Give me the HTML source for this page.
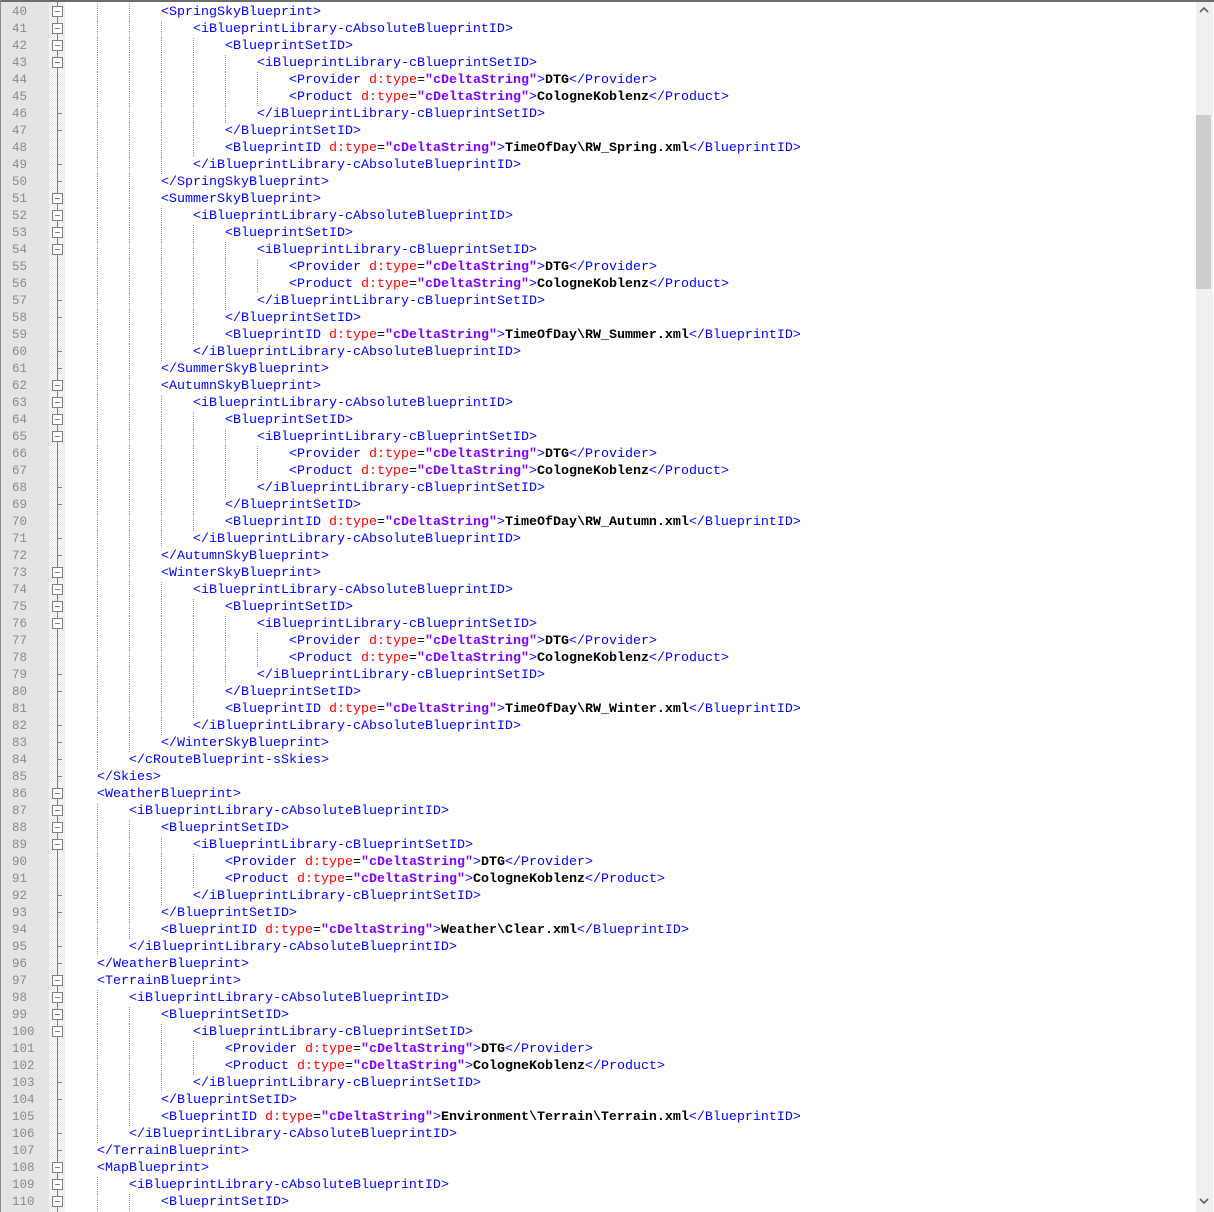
<!DOCTYPE html>
<html><head><meta charset="utf-8"><style>
html,body{margin:0;padding:0;width:1214px;height:1212px;overflow:hidden;background:#fff;}
#wrap{position:absolute;left:0;top:0;width:1214px;height:1212px;}
#topb{position:absolute;left:0;top:0;width:1214px;height:2px;background:#6d6d6d;}
#leftb{position:absolute;left:0;top:0;width:1px;height:1212px;background:#8a8a8a;}
#num{position:absolute;left:1px;top:2px;width:48px;height:1210px;background:#e4e4e4;}
#fold{position:absolute;left:49px;top:2px;width:16px;height:1210px;background-color:#f4f4f4;
 background-image:repeating-conic-gradient(#e8e8e8 0 25%,#fbfbfb 0 50%);background-size:2px 2px;}
#sb{position:absolute;left:1196px;top:2px;width:17px;height:1210px;background:#f0f0f0;}
#thumb{position:absolute;left:1196px;top:115px;width:15px;height:174px;background:#cdcdcd;}
.row{position:absolute;left:0;height:17px;width:1196px;font-family:"Liberation Mono",monospace;font-size:13.33px;line-height:17px;white-space:pre;}
.ln{position:absolute;left:12px;color:#8a8a8a;font-size:12.5px;}
.code{position:absolute;top:0;}
.t{color:#0000ff}.a{color:#ff0000}.v{color:#8000ff;font-weight:bold}.x{color:#000;font-weight:bold}.e{color:#000}
.g{position:absolute;top:0;width:1px;height:17px;background:repeating-linear-gradient(#999 0 1px,transparent 1px 2px);}
.vl{position:absolute;left:57px;width:1px;background:#808080;}
.box{position:absolute;left:52px;width:11px;height:11px;border:1px solid #808080;background:#fff;box-sizing:border-box;}
.box:after{content:"";position:absolute;left:2px;top:4px;width:5px;height:1px;background:#808080;}
.tick{position:absolute;left:57px;width:5px;height:1px;background:#808080;}
</style></head><body><div id="wrap">
<div id="num"></div><div id="fold"></div>
<div id="lines"></div>
<div id="sb"></div><div id="thumb"></div>
<svg style="position:absolute;left:1198px;top:6px" width="12" height="8"><path d="M2 6 L6 2 L10 6" stroke="#606060" stroke-width="1.6" fill="none"/></svg>
<svg style="position:absolute;left:1198px;top:1197px" width="12" height="8"><path d="M2 2 L6 6 L10 2" stroke="#606060" stroke-width="1.6" fill="none"/></svg>
<div id="topb"></div><div id="leftb"></div>
</div>
<script>
var L=[
[3,'<SpringSkyBlueprint>'],
[4,'<iBlueprintLibrary-cAbsoluteBlueprintID>'],
[5,'<BlueprintSetID>'],
[6,'<iBlueprintLibrary-cBlueprintSetID>'],
[7,'<Provider d:type="cDeltaString">DTG</Provider>'],
[7,'<Product d:type="cDeltaString">CologneKoblenz</Product>'],
[6,'</iBlueprintLibrary-cBlueprintSetID>'],
[5,'</BlueprintSetID>'],
[5,'<BlueprintID d:type="cDeltaString">TimeOfDay\\RW_Spring.xml</BlueprintID>'],
[4,'</iBlueprintLibrary-cAbsoluteBlueprintID>'],
[3,'</SpringSkyBlueprint>'],
[3,'<SummerSkyBlueprint>'],
[4,'<iBlueprintLibrary-cAbsoluteBlueprintID>'],
[5,'<BlueprintSetID>'],
[6,'<iBlueprintLibrary-cBlueprintSetID>'],
[7,'<Provider d:type="cDeltaString">DTG</Provider>'],
[7,'<Product d:type="cDeltaString">CologneKoblenz</Product>'],
[6,'</iBlueprintLibrary-cBlueprintSetID>'],
[5,'</BlueprintSetID>'],
[5,'<BlueprintID d:type="cDeltaString">TimeOfDay\\RW_Summer.xml</BlueprintID>'],
[4,'</iBlueprintLibrary-cAbsoluteBlueprintID>'],
[3,'</SummerSkyBlueprint>'],
[3,'<AutumnSkyBlueprint>'],
[4,'<iBlueprintLibrary-cAbsoluteBlueprintID>'],
[5,'<BlueprintSetID>'],
[6,'<iBlueprintLibrary-cBlueprintSetID>'],
[7,'<Provider d:type="cDeltaString">DTG</Provider>'],
[7,'<Product d:type="cDeltaString">CologneKoblenz</Product>'],
[6,'</iBlueprintLibrary-cBlueprintSetID>'],
[5,'</BlueprintSetID>'],
[5,'<BlueprintID d:type="cDeltaString">TimeOfDay\\RW_Autumn.xml</BlueprintID>'],
[4,'</iBlueprintLibrary-cAbsoluteBlueprintID>'],
[3,'</AutumnSkyBlueprint>'],
[3,'<WinterSkyBlueprint>'],
[4,'<iBlueprintLibrary-cAbsoluteBlueprintID>'],
[5,'<BlueprintSetID>'],
[6,'<iBlueprintLibrary-cBlueprintSetID>'],
[7,'<Provider d:type="cDeltaString">DTG</Provider>'],
[7,'<Product d:type="cDeltaString">CologneKoblenz</Product>'],
[6,'</iBlueprintLibrary-cBlueprintSetID>'],
[5,'</BlueprintSetID>'],
[5,'<BlueprintID d:type="cDeltaString">TimeOfDay\\RW_Winter.xml</BlueprintID>'],
[4,'</iBlueprintLibrary-cAbsoluteBlueprintID>'],
[3,'</WinterSkyBlueprint>'],
[2,'</cRouteBlueprint-sSkies>'],
[1,'</Skies>'],
[1,'<WeatherBlueprint>'],
[2,'<iBlueprintLibrary-cAbsoluteBlueprintID>'],
[3,'<BlueprintSetID>'],
[4,'<iBlueprintLibrary-cBlueprintSetID>'],
[5,'<Provider d:type="cDeltaString">DTG</Provider>'],
[5,'<Product d:type="cDeltaString">CologneKoblenz</Product>'],
[4,'</iBlueprintLibrary-cBlueprintSetID>'],
[3,'</BlueprintSetID>'],
[3,'<BlueprintID d:type="cDeltaString">Weather\\Clear.xml</BlueprintID>'],
[2,'</iBlueprintLibrary-cAbsoluteBlueprintID>'],
[1,'</WeatherBlueprint>'],
[1,'<TerrainBlueprint>'],
[2,'<iBlueprintLibrary-cAbsoluteBlueprintID>'],
[3,'<BlueprintSetID>'],
[4,'<iBlueprintLibrary-cBlueprintSetID>'],
[5,'<Provider d:type="cDeltaString">DTG</Provider>'],
[5,'<Product d:type="cDeltaString">CologneKoblenz</Product>'],
[4,'</iBlueprintLibrary-cBlueprintSetID>'],
[3,'</BlueprintSetID>'],
[3,'<BlueprintID d:type="cDeltaString">Environment\\Terrain\\Terrain.xml</BlueprintID>'],
[2,'</iBlueprintLibrary-cAbsoluteBlueprintID>'],
[1,'</TerrainBlueprint>'],
[1,'<MapBlueprint>'],
[2,'<iBlueprintLibrary-cAbsoluteBlueprintID>'],
[3,'<BlueprintSetID>']
];
function esc(s){return s.replace(/&/g,'&amp;').replace(/</g,'&lt;').replace(/>/g,'&gt;');}
function hl(s){
 var out='',re=/(<[^>]*>)|([^<]+)/g,m;
 while((m=re.exec(s))){
  if(m[1]){
   var t=m[1],mm=t.match(/^(<\/?[\w\-]+)(.*?)(\/?>)$/);
   out+='<span class="t">'+esc(mm[1])+'</span>';
   var rest=mm[2];
   rest=rest.replace(/ ([\w:]+)="([^"]*)"/g,function(_,n,v){return ' <span class="a">'+n+'</span><span class="e">=</span><span class="v">"'+v+'"</span>';});
   out+=rest+'<span class="t">'+esc(mm[3])+'</span>';
  } else out+='<span class="x">'+esc(m[2])+'</span>';
 }
 return out;
}
var h='';
for(var i=0;i<L.length;i++){
 var lv=L[i][0],s=L[i][1],yy=4+17*i;
 h+='<div class="row" style="top:'+yy+'px"><span class="ln">'+(40+i)+'</span>';
 for(var k=1;k<lv;k++)h+='<div class="g" style="left:'+(65+32*k)+'px"></div>';
 h+='<span class="code" style="left:'+(65+32*lv)+'px">'+hl(s)+'</span></div>';
 var open=/^<[^\/]/.test(s)&&s.indexOf('</')<0;
 var close=/^<\//.test(s);
 if(open)h+='<div class="box" style="top:'+(yy+2)+'px"></div>';
 else if(close)h+='<div class="tick" style="top:'+(yy+7)+'px"></div>';
}
h='<div class="vl" style="top:2px;height:1210px"></div>'+h;
document.getElementById('lines').innerHTML=h;
</script>
</body></html>
